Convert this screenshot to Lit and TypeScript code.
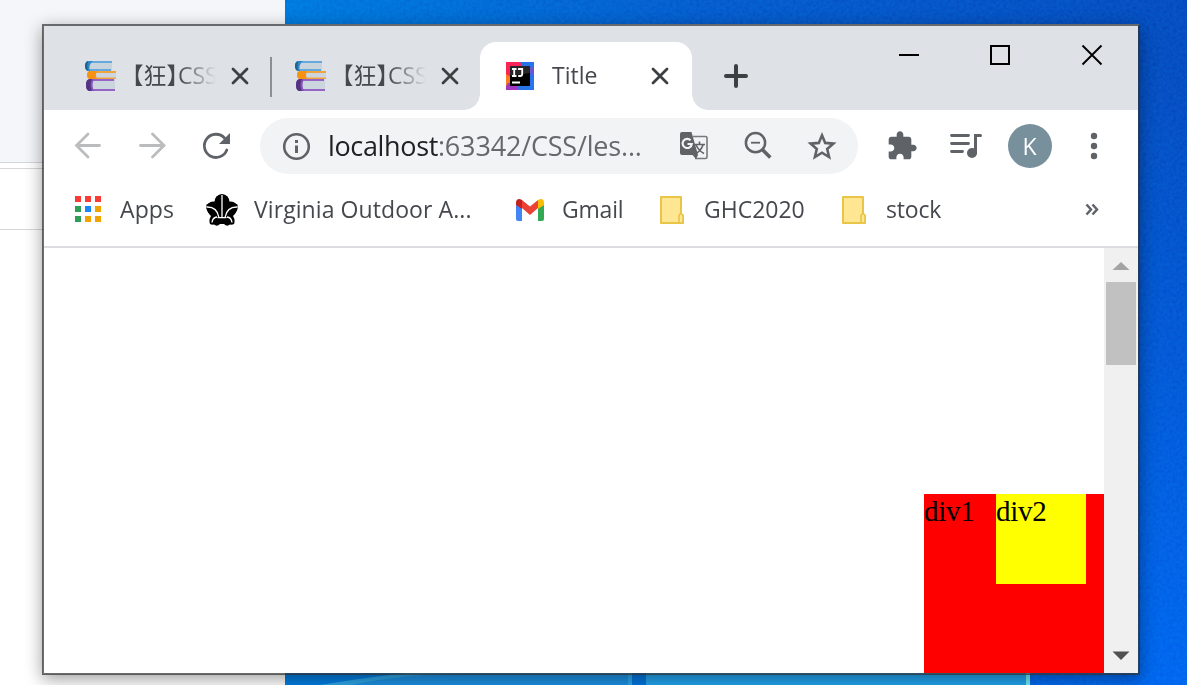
import { LitElement, html, svg, css } from "lit";
import { customElement, property } from "lit/decorators.js";

const books = html`<svg width="32" height="32" viewBox="0 0 32 32">
  <path d="M28 1H5Q1 1 1 6t4 5h23z" fill="#c9d3dc"/>
  <path d="M28 1H5v2h23zM5 9h22v2H5z" fill="#62a9df"/>
  <path d="M8 1H5Q1 1 1 6t4 5h1Q5 9 5.500 6T9 1z" fill="#2f86c5"/>
  <path d="M4 1Q1 2 1 6t3 5Q2.500 6 4 1z" fill="#1c638f"/>
  <path d="M32 11H7q-4 0-4 4t4 4h25z" fill="#cdd6de"/>
  <path d="M32 11H7v2h25zM7 17.500h25V19H7z" fill="#f2a43a"/>
  <path d="M13 11H6q-3 0-3 4t3 4h7q-2-4 0-8z" fill="#f79111"/>
  <path d="M31 19H7q-5 0-5 6t5 6h24z" fill="#cbd5dd"/>
  <path d="M30 19H7v2h23zM7 29h24v2H7z" fill="#9564c4"/>
  <path d="M10 19H6q-4 0-4 6t4 6h4q-3-6 0-12z" fill="#8553ba"/>
  <path d="M8 19H6q-4 0-4 6t4 6h2q-3-6 0-12z" fill="#543382"/>
</svg>`;

const idea = html`<svg width="28" height="28" viewBox="0 0 28 28">
  <path d="M0 0h28v28H0z" fill="#2775ea"/>
  <path d="M0 0h14l3 5L5 17H0z" fill="#fc2457"/>
  <path d="M22 4l6 2v8l-6-4z" fill="#6a57d4"/>
  <path d="M0 12l6 4-4 8H0z" fill="#fb7c21"/>
  <path d="M2 21l8 2 3 5H0v-4z" fill="#a237bd"/>
  <path d="M4 4h20v20H4z" fill="#000"/>
  <path d="M4 4h20v7L4 14z" fill="#333" opacity=".75"/>
  <path d="M6 7h4.500M6 14h4.500M8.200 7v7M12 7h4.200v5q0 2-2 2h-2M6 20.500h8" fill="none" stroke="#fff" stroke-width="1.800"/>
</svg>`;

const cross = html`<svg width="18" height="18" viewBox="0 0 18 18">
  <path d="M2 2l14 14M16 2L2 16" stroke="#3c4043" stroke-width="2.800" stroke-linecap="round"/></svg>`;

const icon = (body: unknown) => html`<svg class="icon" width="32" height="32" viewBox="0 0 32 32">${body}</svg>`;

const back = icon(svg`<path d="M27.500 15.500H4.500M16 4L4.500 15.500 16 27" fill="none" stroke="#babcbe" stroke-width="2.800" stroke-linecap="round"/>`);
const forward = icon(svg`<path d="M4.500 15.500H27.500M16.500 4L28 15.500 16.500 27" fill="none" stroke="#babcbe" stroke-width="2.800" stroke-linecap="round"/>`);
const reload = icon(svg`<path d="M26.800 20A11.600 11.600 0 1 1 24.500 8" fill="none" stroke="#5f6368" stroke-width="2.800" stroke-linecap="round"/><path d="M30 3v11H19z" fill="#5f6368"/>`);
const info = icon(svg`<circle cx="16.500" cy="16.500" r="12.300" fill="none" stroke="#5f6368" stroke-width="2.600"/><path d="M15 10h3v3h-3zM15 15.500h3V23h-3z" fill="#5f6368"/>`);
const translate = icon(svg`
  <path d="M15 6.500h12.500q1.500 0 1.500 1.500v19q0 1.500-1.500 1.500H17" fill="none" stroke="#77797c" stroke-width="1.600"/>
  <path d="M17 14.500h10M21.500 11.500v3M25 15q-2 6-8 9M18 15q3 6 8 8.500" fill="none" stroke="#606266" stroke-width="1.600"/>
  <path d="M2 4q0-2 2-2h9.500l6.500 23-2 4-3.500-4H4q-2 0-2-2z" fill="#606266"/>
  <path d="M12.600 10.300A4.600 4.600 0 1 0 13.800 14H9.500" fill="none" stroke="#f1f3f4" stroke-width="2.100"/>`);
const zoomOut = icon(svg`<circle cx="13.500" cy="12.700" r="9.600" fill="none" stroke="#606266" stroke-width="2.500"/><path d="M9 12.700h9" stroke="#606266" stroke-width="1.800"/><path d="M20.300 19.500l8 8" stroke="#606266" stroke-width="3.600"/>`);
const star = icon(svg`<path d="M16 5.300l3.200 7.600 8.200.7-6.200 5.400 1.900 8-7.100-4.300L8.900 27l1.900-8-6.200-5.400 8.200-.7z" fill="none" stroke="#5f6368" stroke-width="2.600"/>`);
const puzzle = icon(svg`<path transform="scale(1.333)" d="M20.500 11H19V7c0-1.100-.9-2-2-2h-4V3.500C13 2.120 11.880 1 10.500 1S8 2.120 8 3.500V5H4c-1.100 0-1.990.9-1.990 2v3.800H3.500c1.490 0 2.700 1.210 2.700 2.700s-1.210 2.700-2.700 2.700H2V20c0 1.100.9 2 2 2h3.800v-1.500c0-1.490 1.210-2.700 2.700-2.700s2.700 1.210 2.700 2.700V22H17c1.100 0 2-.9 2-2v-4h1.500c1.380 0 2.500-1.120 2.500-2.500S21.880 11 20.500 11z" fill="#5f6368"/>`);
const queue = icon(svg`<path d="M1.500 5.500h17M1.500 13.500h17M1.500 21.500h11" stroke="#5f6368" stroke-width="2.800" stroke-linecap="round"/><circle cx="22" cy="23" r="5" fill="#5f6368"/><path d="M25.500 23V5.500h5" fill="none" stroke="#5f6368" stroke-width="3" stroke-linecap="round"/>`);
const dots = icon(svg`<g fill="#5f6368"><circle cx="16" cy="6" r="3.200"/><circle cx="16" cy="16" r="3.200"/><circle cx="16" cy="26" r="3.200"/></g>`);

const apps = icon(svg`
  <path d="M3 2h6v6H3zM13 2h6v6h-6zM23 2h6v6h-6z" fill="#f83b35"/>
  <path d="M3 12h6v6H3zM3 22h6v6H3z" fill="#2f9f58"/>
  <path d="M13 12h6v6h-6z" fill="#1b87f5"/>
  <path d="M23 12h6v6h-6zM13 22h6v6h-6zM23 22h6v6h-6z" fill="#f2a300"/>`);
const lily = icon(svg`
  <path d="M16 .3Q22 1 24 9q5-.5 7.500 1.500.8 6.500-4.500 11.500 2.500 4 1 8-2 1-4 .5-3 2.500-6-.5h-4q-3 3-6 .5-2 .5-4-.5-1.500-4 1-8Q-.300 17 .5 10.500 3 8.500 8 9q2-8 8-8.700z" fill="#000"/>
  <circle cx="16" cy="7.500" r="7.300"/><circle cx="7" cy="14" r="6.500"/><circle cx="25" cy="14" r="6.500"/>
  <path d="M16 1v22.500M.5 13Q11 12.500 13 23.500M31.500 13Q21 12.500 19 23.500M6 28.500q.5-5 5-5.500M26 28.500q-.5-5-5-5.500M11.500 23.600h9" fill="none" stroke="#fff" stroke-width="1.300"/>`);
const gmail = icon(svg`
  <path d="M2 9l6 5v13H4q-2 0-2-2z" fill="#4285f4"/>
  <path d="M24 14l6-5v16q0 2-2 2h-4z" fill="#34a853"/>
  <path d="M2 11V8.500C2 5 5 4 8 6v9z" fill="#c5221f"/>
  <path d="M30 11V8.500C30 5 27 4 24 6v9z" fill="#fbbc04"/>
  <path d="M8 6l8 6.500L24 6v8l-8 7-8-7z" fill="#ea4335"/>`);
const folder = icon(svg`
  <path d="M5 3h20v18l2 1v7H5z" fill="#ffe692" stroke="#e8c547" stroke-width="2" stroke-linejoin="round"/>
  <path d="M23 22q0-2 2-2t2 2v5q0 2-2 2h-2z" fill="#ffe692" stroke="#e8c547" stroke-width="1.600"/>`);

@customElement("browser-tab")
export class BrowserTab extends LitElement {
  @property() label = "";
  @property({ type: Boolean, reflect: true }) active = false;

  static styles = css`
    :host { display: flex; align-items: center; box-sizing: border-box; width: 210px; height: 68px; padding-left: 24px; position: relative; color: #45484c; }
    :host([active]) { width: 212px; padding-left: 26px; background: #fff; border-radius: 16px 16px 0 0; }
    :host([active])::before, :host([active])::after { content: ""; position: absolute; bottom: 0; width: 16px; height: 16px; }
    :host([active])::before { left: -16px; background: radial-gradient(circle at 0 0, transparent 15.500px, #fff 16px); }
    :host([active])::after { right: -16px; background: radial-gradient(circle at 100% 0, transparent 15.500px, #fff 16px); }
    svg { display: block; flex: none; }
    .title { width: 92px; margin: 0 7px 2px 16px; white-space: nowrap; line-height: 34px; font-feature-settings: "halt";
      -webkit-mask-image: linear-gradient(90deg, #000 46px, transparent 84px); }
    :host([active]) .title { width: 82px; margin-left: 18px; margin-right: 17px; -webkit-mask-image: none; }
  `;

  render() {
    return html`${this.active ? idea : books}<span class="title">${this.label}</span>${cross}`;
  }
}

@customElement("app-root")
export class AppRoot extends LitElement {
  static styles = css`
    :host { display: block; position: relative; width: 1187px; height: 685px; overflow: hidden;
      font: 23px/32px "Open Sans", "Noto Sans", "Noto Sans CJK SC", sans-serif; color: #45484c;
      background: linear-gradient(180deg, rgba(0,110,255,0) 10%, rgba(0,105,255,.75) 100%), linear-gradient(90deg, #0074dc 285px, #0456cc 700px, #0446bd 1187px); }
    svg { display: block; flex: none; }
    .grain { position: absolute; inset: 0; opacity: .3; mix-blend-mode: soft-light; }
    .beams { position: absolute; left: 285px; bottom: 0; }
    .page { width: 285px; height: 685px; background: #fff; position: relative; }
    .hero { height: 162px; background: #f4f6f9; border-bottom: 1px solid #d5d7da; }
    .rule { height: 5px; border-bottom: 1px solid #d5d7da; }
    .menu { height: 60px; border-bottom: 1px solid #d5d7da; }
    .window { position: absolute; left: 42px; top: 24px; width: 1094px; height: 647px; display: flex; flex-direction: column;
      border: 2px solid rgba(50,50,50,.7); border-top-color: #666a6d; background: #fff; background-clip: padding-box; box-shadow: 0 4px 16px rgba(0,0,0,.38); }
    .strip { height: 84px; display: flex; background: #dee1e6; box-sizing: border-box; padding-left: 16px; flex: none; }
    .strip browser-tab { margin-top: 16px; }
    .divider { width: 2px; height: 40px; margin: 31px -2px 0 0; background: #8b8e93; flex: none; }
    .plus { margin: 38px auto 0 32px; }
    .controls { display: flex; gap: 70px; margin: 18px 35px 0 0; }
    .toolbar { height: 72px; display: flex; align-items: center; padding-left: 28px; gap: 32px; flex: none; }
    .omnibox { box-sizing: border-box; flex: 0 0 598px; height: 56px; margin: 0 -4px; padding: 0 20px; border-radius: 28px; background: #f1f3f4; display: flex; align-items: center; gap: 32px; }
    .url { width: 350px; margin: 0 -32px 0 -16px; font-size: 27px; line-height: 38px; letter-spacing: -0.18px; white-space: nowrap; color: #65686c; }
    .host { color: #202124; letter-spacing: -0.35px; }
    .avatar { width: 44px; height: 44px; margin: 0 -6px; border-radius: 50%; background: #78909c; color: #fff; line-height: 44px; text-align: center; text-indent: -1px; }
    .bookmarks { height: 64px; display: flex; align-items: flex-start; flex: none; padding-left: 28px; border-bottom: 2px solid #dadce0; }
    .bookmark { display: flex; gap: 16px; height: 32px; margin-top: 12px; white-space: nowrap; }
    .bookmark span { line-height: 30px; }
    .more { margin: 16px 0 0 auto; padding-right: 38px; }
    .viewport { flex: 1; display: flex; min-height: 0; }
    .document { flex: 1; display: flex; justify-content: flex-end; align-items: flex-end; font: 29px/34px "Liberation Serif", serif; color: #000; }
    .outer { width: 180px; height: 179px; background: #f00; display: flex; letter-spacing: -.3px; }
    .outer span { width: 72px; }
    .inner { width: 90px; height: 90px; background: #ff0; }
    .scrollbar { width: 34px; background: #f0f0f0; display: flex; flex-direction: column; align-items: center; }
    .thumb { width: 30px; height: 83px; background: #c1c1c1; margin-bottom: auto; }
  `;

  private bookmarks = [
    { icon: apps, label: "Apps", width: 134, spacing: 0.1 },
    { icon: lily, label: "Virginia Outdoor A...", width: 308, spacing: 0.08 },
    { icon: gmail, label: "Gmail", width: 142, spacing: -0.2 },
    { icon: folder, label: "GHC2020", width: 182, spacing: 0 },
    { icon: folder, label: "stock", width: 120, spacing: -0.2 },
  ];

  render() {
    return html`
      <svg class="grain" width="1187" height="685">
        <filter id="g"><feTurbulence type="fractalNoise" baseFrequency=".3" numOctaves="2"/><feColorMatrix values="1 0 0 0 0  1 0 0 0 0  1 0 0 0 0  0 0 0 0 1"/></filter>
        <rect width="1187" height="685" filter="url(#g)"/>
      </svg>
      <svg class="beams" width="902" height="40">
        <path d="M0 40L0 0h345v40z" fill="#007ee0"/>
        <path d="M45 40L140 27H345v13z" fill="#1c90e2"/>
        <path d="M35 40Q90 31 140 26l35 2q-60 2-110 12z" fill="#2da5e6"/>
        <path d="M343 0h4v40h-4z" fill="#2ba7ea"/><path d="M347 0h14v40h-14z" fill="#0076dd"/>
        <path d="M361 0h380v40H361z" fill="#22a4ee"/><path d="M741 0h4v40h-4z" fill="#70ecf2"/>
      </svg>
      <div class="page"><div class="hero"></div><div class="rule"></div><div class="menu"></div></div>
      <div class="window">
        <div class="strip">
          <browser-tab label="【狂】CSS"></browser-tab>
          <i class="divider"></i>
          <browser-tab label="【狂】CSS"></browser-tab>
          <browser-tab label="Title" active></browser-tab>
          <svg class="plus" width="24" height="24" viewBox="0 0 24 24"><path d="M12 2v20M2 12h20" stroke="#3c4043" stroke-width="4" stroke-linecap="round"/></svg>
          <div class="controls">
            <svg width="22" height="22"><path d="M2 11h20" stroke="#000" stroke-width="2"/></svg>
            <svg width="22" height="22"><path d="M2 2h18v18H2z" fill="none" stroke="#000" stroke-width="2"/></svg>
            <svg width="22" height="22"><path d="M1.500 1.500l19 19M20.500 1.500l-19 19" stroke="#000" stroke-width="1.900"/></svg>
          </div>
        </div>
        <div class="toolbar">
          ${back}${forward}${reload}
          <div class="omnibox">${info}<div class="url"><span class="host">localhost</span>:63342/CSS/les...</div>${translate}${zoomOut}${star}</div>
          ${puzzle}${queue}<div class="avatar">K</div>${dots}
        </div>
        <div class="bookmarks">
          ${this.bookmarks.map((b) => html`<div class="bookmark" style="width:${b.width}px;letter-spacing:${b.spacing}px">${b.icon}<span>${b.label}</span></div>`)}
          <svg class="more" width="16" height="24" viewBox="0 0 16 24"><path d="M2.500 6.500l4.500 5-4.500 5M8.500 6.500l4.500 5-4.500 5" fill="none" stroke="#5f6368" stroke-width="2.500"/></svg>
        </div>
        <div class="viewport">
          <div class="document"><div class="outer"><span>div1</span><div class="inner">div2</div></div></div>
          <div class="scrollbar">
            <svg width="34" height="34"><path d="M17 14l8.500 8h-17z" fill="#a3a3a3"/></svg>
            <div class="thumb"></div>
            <svg width="34" height="34"><path d="M17 21l8.500-8.500h-17z" fill="#505050"/></svg>
          </div>
        </div>
      </div>
    `;
  }
}
